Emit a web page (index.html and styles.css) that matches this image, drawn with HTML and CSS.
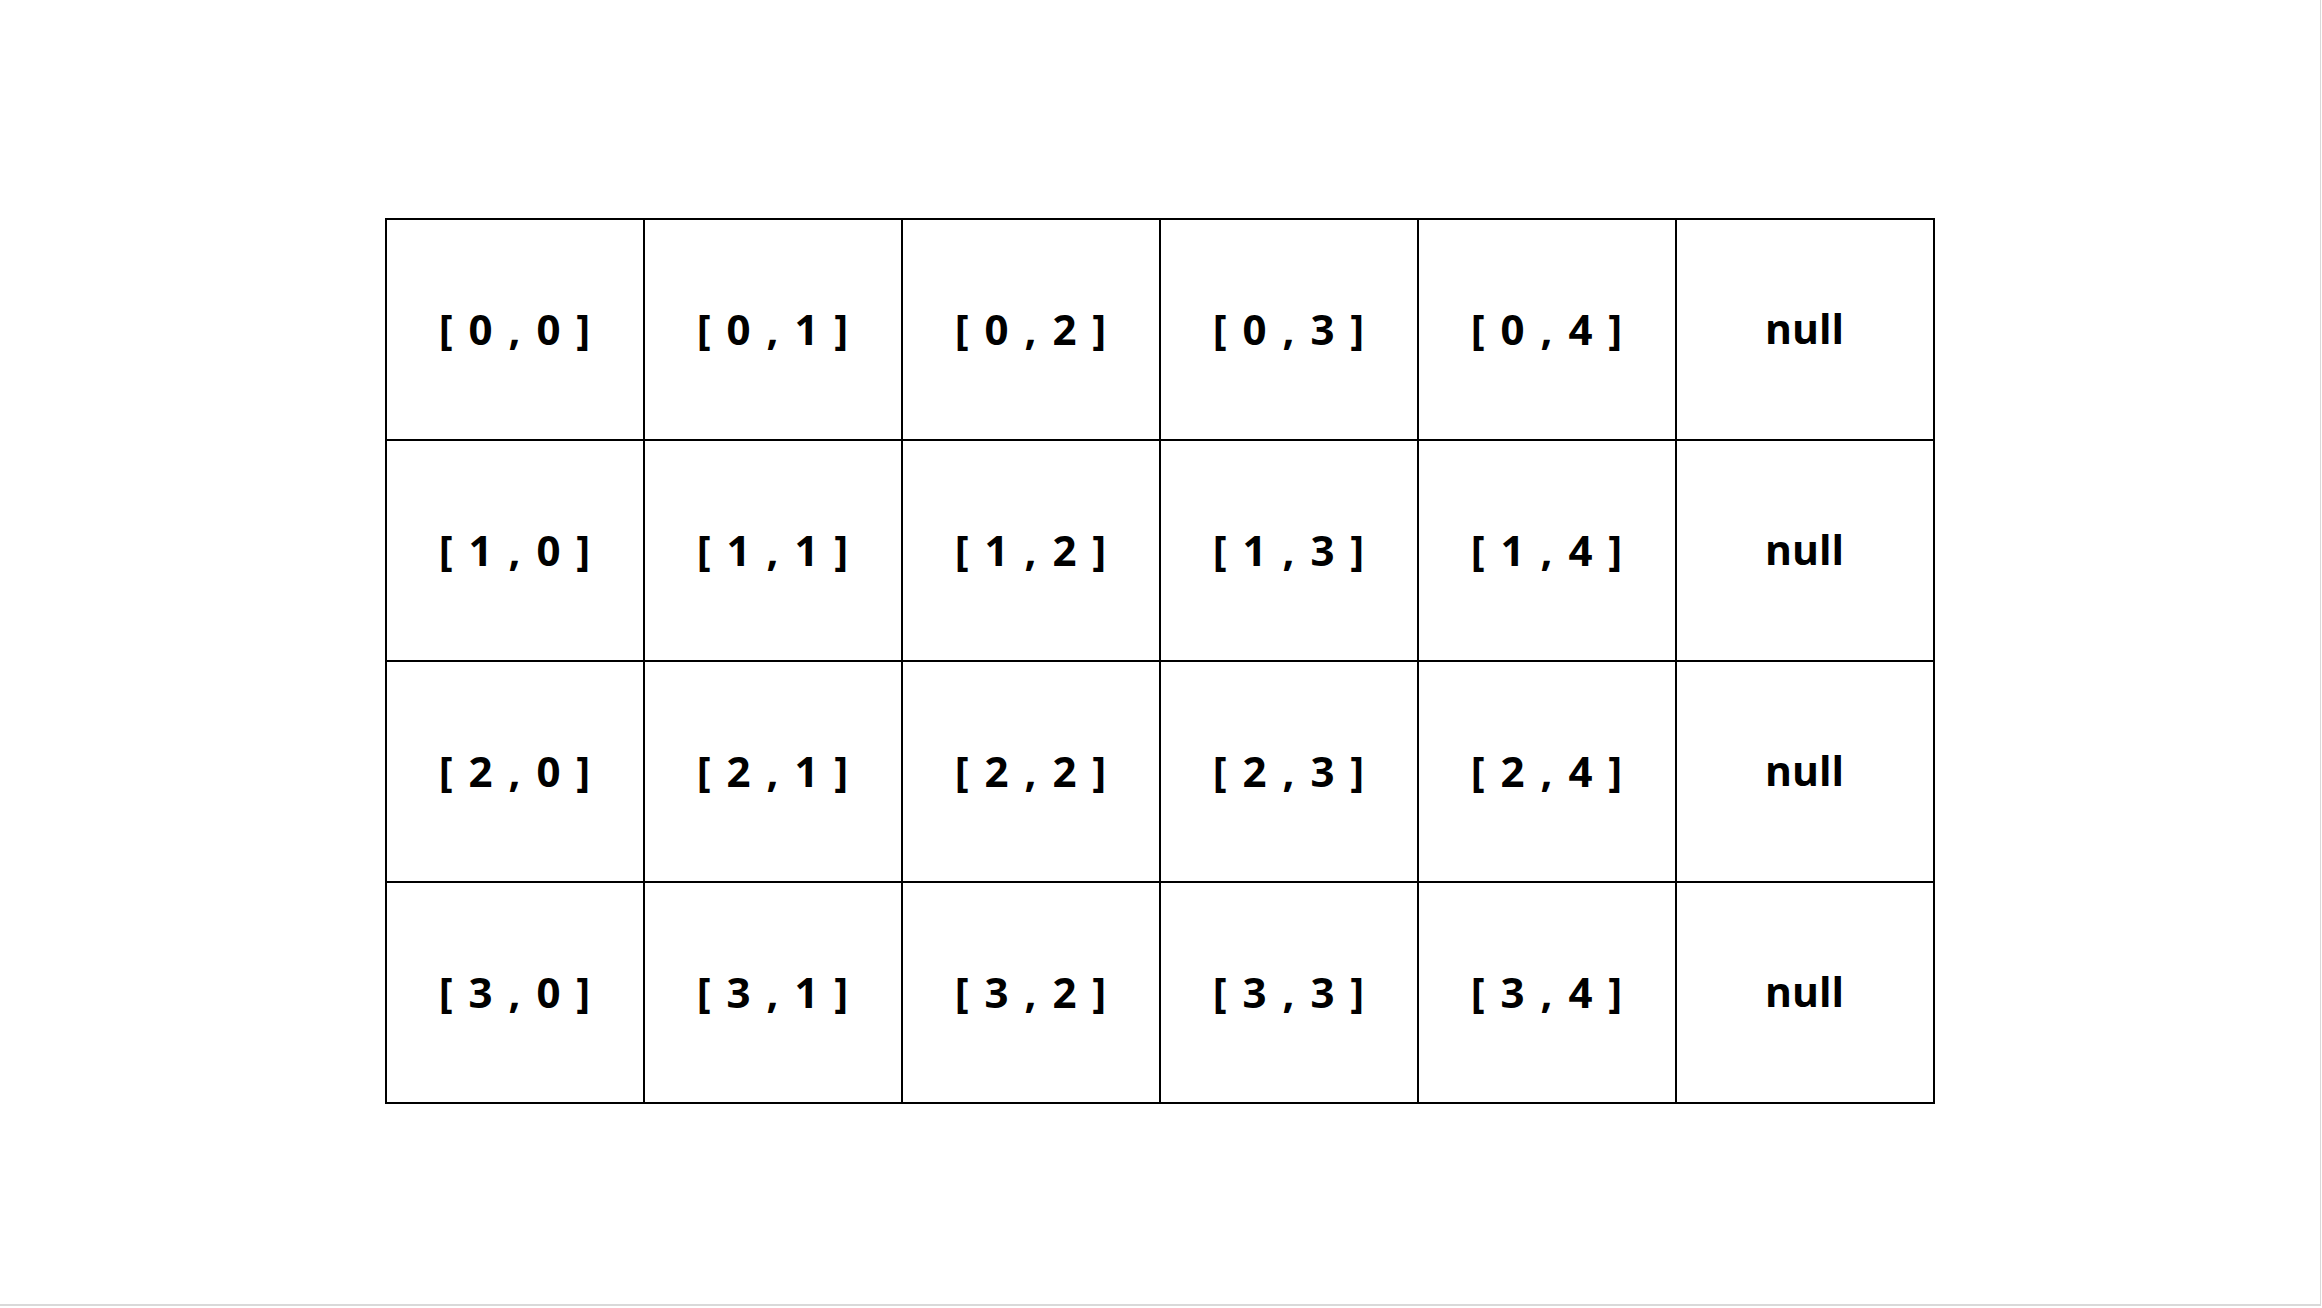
FILE: index.html
```html
<!DOCTYPE html>
<html>
<head>
<meta charset="utf-8">
<link rel="stylesheet" href="styles.css">
</head>
<body>
<div class="slide">
  <div class="grid">
    <div class="cell">[ 0 , 0 ]</div><div class="cell">[ 0 , 1 ]</div><div class="cell">[ 0 , 2 ]</div><div class="cell">[ 0 , 3 ]</div><div class="cell">[ 0 , 4 ]</div><div class="cell null">null</div>
    <div class="cell">[ 1 , 0 ]</div><div class="cell">[ 1 , 1 ]</div><div class="cell">[ 1 , 2 ]</div><div class="cell">[ 1 , 3 ]</div><div class="cell">[ 1 , 4 ]</div><div class="cell null">null</div>
    <div class="cell">[ 2 , 0 ]</div><div class="cell">[ 2 , 1 ]</div><div class="cell">[ 2 , 2 ]</div><div class="cell">[ 2 , 3 ]</div><div class="cell">[ 2 , 4 ]</div><div class="cell null">null</div>
    <div class="cell">[ 3 , 0 ]</div><div class="cell">[ 3 , 1 ]</div><div class="cell">[ 3 , 2 ]</div><div class="cell">[ 3 , 3 ]</div><div class="cell">[ 3 , 4 ]</div><div class="cell null">null</div>
  </div>
</div>
</body>
</html>
```
FILE: styles.css
```css
html, body {
  margin: 0;
  padding: 0;
  background: #ffffff;
}
.slide {
  width: 2321px;
  height: 1306px;
  border-right: 1px solid #d9d9d9;
  border-bottom: 2px solid #d9d9d9;
  background: #ffffff;
  padding-top: 218px;
  box-sizing: border-box;
  display: flex;
  justify-content: center;
  align-items: flex-start;
  font-family: "Open Sans", "Noto Sans", sans-serif;
}
.grid {
  display: grid;
  grid-template-columns: repeat(6, 256px);
  grid-template-rows: repeat(4, 219px);
  gap: 2px;
  padding: 2px;
  background: #000000;
  margin-left: -1px;
}
.cell {
  background: #ffffff;
  display: flex;
  align-items: center;
  justify-content: center;
  font-weight: 700;
  font-size: 42px;
  color: #000000;
  white-space: pre;
  word-spacing: 5px;
  padding-bottom: 3px;
}
.null {
  font-size: 41px;
  word-spacing: 0;
}
```
